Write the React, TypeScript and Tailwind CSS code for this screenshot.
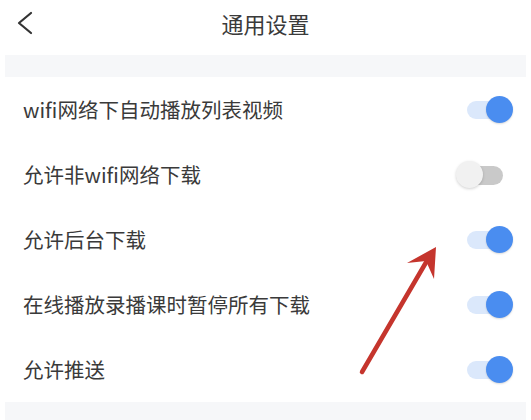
import React from "react";

const rows: { label: string; on: boolean }[] = [
  { label: "wifi网络下自动播放列表视频", on: true },
  { label: "允许非wifi网络下载", on: false },
  { label: "允许后台下载", on: true },
  { label: "在线播放录播课时暂停所有下载", on: true },
  { label: "允许推送", on: true },
];

function Toggle({ on }: { on: boolean }) {
  return (
    <div className="relative w-[58px] h-[28px] shrink-0">
      {on ? (
        <>
          <div className="absolute left-[11px] top-[5px] w-[36px] h-[18px] rounded-full bg-[#dbe8fb]" />
          <div className="absolute left-[30px] top-0 w-[27px] h-[27px] rounded-full bg-[#4a8df0] shadow-[0_1px_2px_rgba(0,0,0,0.15)]" />
        </>
      ) : (
        <>
          <div className="absolute left-[12px] top-[5px] w-[35px] h-[19px] rounded-full bg-[#c9c9c9]" />
          <div className="absolute left-0 top-0 w-[27px] h-[27px] rounded-full bg-[#f1f1f1] shadow-[0_1px_3px_rgba(0,0,0,0.18)]" />
        </>
      )}
    </div>
  );
}

export default function App() {
  return (
    <div
      className="relative w-[531px] h-[420px] bg-white overflow-hidden text-[#3a3a3a]"
      style={{ fontFamily: '"Noto Sans CJK SC", "Noto Sans", sans-serif' }}
    >
      <div className="relative h-[55px] flex items-center justify-center">
        <svg className="absolute left-[14px] top-[9px]" width="24" height="28" viewBox="0 0 24 28">
          <polyline points="17,4 5,14 17,24" fill="none" stroke="#333" strokeWidth="2.2" strokeLinecap="round" strokeLinejoin="round" />
        </svg>
        <span className="text-[22px] leading-none -mt-[10px]">通用设置</span>
      </div>
      <div className="h-[22px] mx-[5px] bg-[#f6f7f9]" />
      <div className="flex flex-col">
        {rows.map((r) => (
          <div key={r.label} className="h-[65px] flex items-center justify-between pl-[23px] pr-[17px]">
            <span className="text-[20.5px] leading-none">{r.label}</span>
            <Toggle on={r.on} />
          </div>
        ))}
      </div>
      <div className="h-[30px] mx-[5px] bg-[#f6f7f9]" />
      <svg className="absolute left-0 top-0 pointer-events-none" width="531" height="420" viewBox="0 0 531 420">
        <line x1="362" y1="372" x2="428" y2="259" stroke="#c5352d" strokeWidth="4.5" strokeLinecap="round" />
        <polygon points="436,247 407,263 426,261 434,279" fill="#c5352d" />
      </svg>
    </div>
  );
}
